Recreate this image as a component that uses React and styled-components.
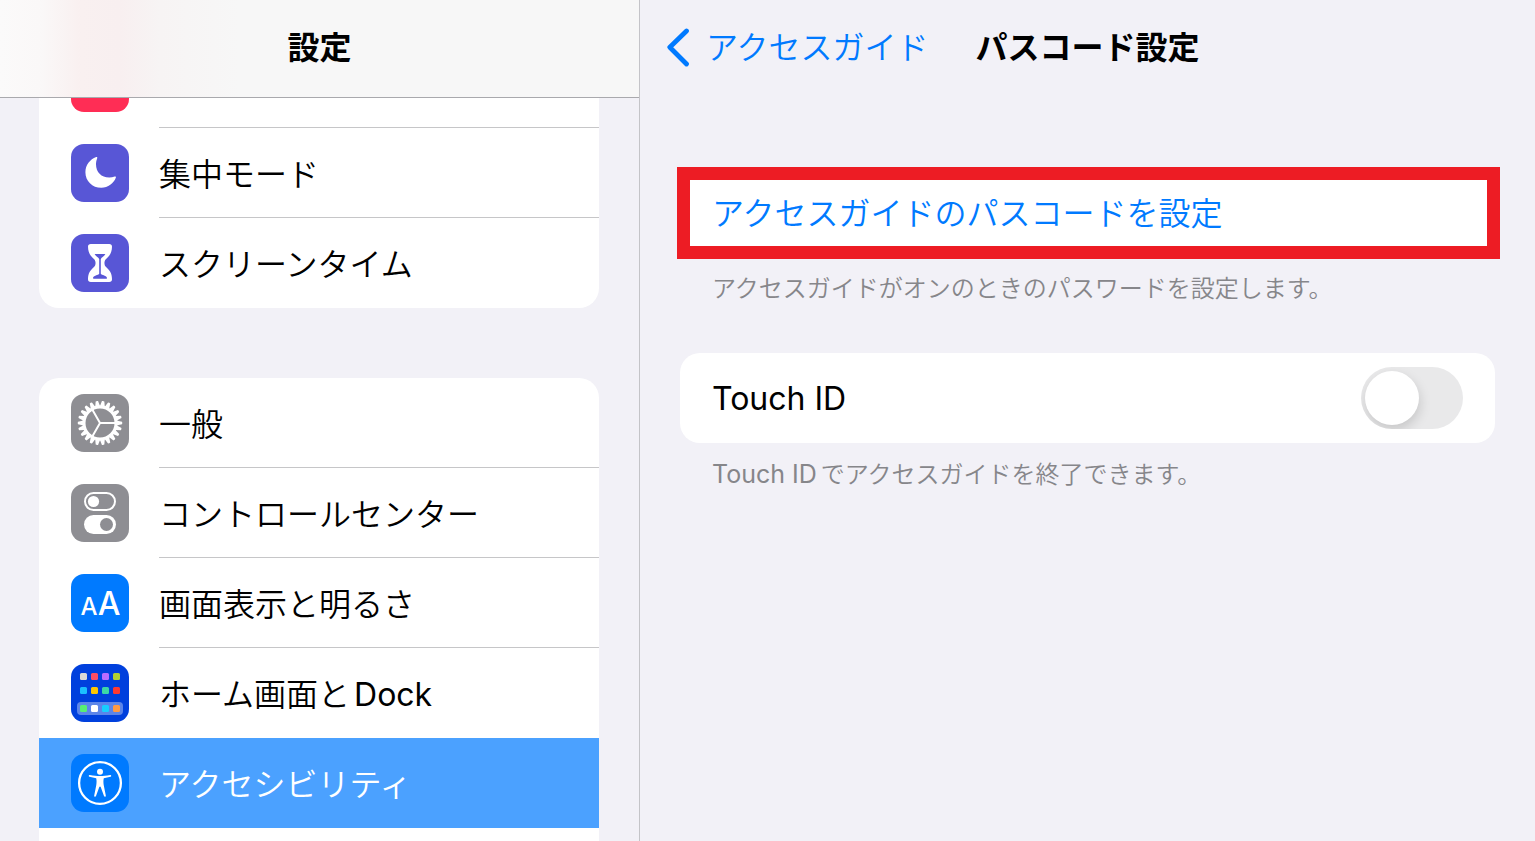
import React from "react";
import styled, { createGlobalStyle } from "styled-components";

const GlobalStyle = createGlobalStyle`
  *, *::before, *::after { box-sizing: border-box; }
  body {
    margin: 0;
    background: #f2f1f7;
    color: #000;
    font-family: Inter, "Noto Sans CJK JP", sans-serif;
    font-size: 32px;
    font-weight: 350;
    line-height: 48px;
  }
`;

const Screen = styled.div`
  display: flex;
  height: 100vh;
  overflow: hidden;
`;

const Sidebar = styled.nav`
  flex: 0 0 640px;
  border-right: 1px solid #c4c4c8;
  overflow: hidden;
`;

const SidebarHeader = styled.header`
  position: relative;
  z-index: 1;
  display: flex;
  align-items: center;
  justify-content: center;
  height: 98px;
  padding-bottom: 2px;
  border-bottom: 1px solid #a9a9ad;
  background: linear-gradient(90deg, #fbfafa 0, #faf8f8 40px, #f9f0f0 80px, #f8eff0 120px, #f7f4f4 160px, #f7f7f7 240px);
`;

const Title = styled.h1`
  margin: 0;
  font-size: 32px;
  font-weight: 600;
  line-height: 48px;
  white-space: nowrap;
`;

const Menu = styled.ul`
  list-style: none;
  margin: ${(p) => (p.$scrolled ? "-60px" : "70px")} 40px 0 39px;
  padding: 0;
  border-radius: 20px;
  overflow: hidden;
  background: #fff;
`;

const MenuLink = styled.a`
  display: flex;
  align-items: center;
  gap: 30px;
  height: 90px;
  padding-left: 32px;
  color: ${(p) => (p.$selected ? "#fff" : "#000")};
  background: ${(p) => (p.$selected ? "#4ba1ff" : "transparent")};
  text-decoration: none;
`;

const MenuLabel = styled.span`
  flex: 1;
  display: flex;
  align-items: center;
  height: 90px;
  padding-top: 4px;
  border-bottom: 1px solid ${(p) => (p.$divider ? "#c6c6c8" : "transparent")};
  white-space: nowrap;
`;

const Tile = styled.span`
  flex: none;
  width: 58px;
  height: 58px;
  border-radius: 13px;
  overflow: hidden;
  background: ${(p) => p.$color};

  svg { display: block; }
`;

const Latin = styled.span`
  font-size: ${(p) => (p.$small ? "25px" : "32px")};
  font-weight: 400;
  margin-left: ${(p) => (p.$spaceBefore ? "4px" : "0")};
  margin-right: ${(p) => (p.$spaceAfter ? "4px" : "0")};
`;

const Detail = styled.main`
  flex: 1;
  min-width: 0;
`;

const DetailHeader = styled.header`
  display: grid;
  grid-template-columns: 1fr auto 1fr;
  align-items: center;
  height: 98px;
  padding: 0 26px 2px;
`;

const BackButton = styled.button`
  display: flex;
  align-items: center;
  gap: 16px;
  justify-self: start;
  padding: 0;
  border: 0;
  background: none;
  color: #007aff;
  font: inherit;
  white-space: nowrap;
  cursor: pointer;
`;

const Sections = styled.div`
  display: flex;
  flex-direction: column;
  gap: 46px;
  padding: 70px 40px 40px;
`;

const Card = styled.div`
  position: relative;
  display: flex;
  align-items: center;
  justify-content: space-between;
  height: 90px;
  padding: 2px 32px 0;
  border-radius: 20px;
  background: #fff;
`;

const CardButton = styled.button`
  flex: 1;
  padding: 0;
  border: 0;
  background: none;
  color: #007aff;
  font: inherit;
  text-align: left;
  cursor: pointer;
`;

const Highlight = styled.span`
  position: absolute;
  inset: -1px -5px -1px -3px;
  border: 13px solid #ed1c24;
  pointer-events: none;
`;

const Note = styled.p`
  margin: 13px 32px 0;
  color: #86868a;
  font-size: 24px;
  line-height: 36px;
`;

const Switch = styled.input`
  appearance: none;
  flex: none;
  width: 102px;
  height: 62px;
  margin: 0 0 2px;
  padding: 4px;
  border-radius: 31px;
  background: #e9e9ea;
  overflow: hidden;
  cursor: pointer;

  &::before {
    content: "";
    display: block;
    width: 54px;
    height: 54px;
    border-radius: 50%;
    background: #fff;
    box-shadow: 1px 5px 12px rgba(0, 0, 0, 0.15);
  }

  &:checked { background: #34c759; }
  &:checked::before { margin-left: 40px; }
`;

const Svg = ({ children }) => (
  <svg width="58" height="58" viewBox="0 0 58 58" fill="none" aria-hidden="true">
    {children}
  </svg>
);

const MoonIcon = () => (
  <Svg>
    <path
      fill="#fff"
      d="M25.2 13.1C19 15.4 14.4 21 14.4 28.2C14.4 37 21.3 43.8 30.3 43.8C37 43.8 42.8 39.6 44.9 33.6C45.1 32.8 44.6 32.2 43.7 32.5C42 33.2 40.2 33.5 38.2 33.5C30.3 33.5 25 28.3 25 20.3C25 18 25.5 16 26.2 14.2C26.5 13.4 26 12.8 25.2 13.1Z"
    />
  </Svg>
);

const HourglassIcon = () => (
  <Svg>
    <path
      fill="#fff"
      d="M19.8 10H38.2C40 10 41 11 41 12.8C41 19 38.3 22 34.8 25.2C33 26.8 33 31.2 34.8 32.8C38.3 36 41 39 41 45.2C41 47 40 48 38.2 48H19.8C18 48 17 47 17 45.2C17 39 19.7 36 23.2 32.8C25 31.2 25 26.8 23.2 25.2C19.7 22 17 19 17 12.8C17 11 18 10 19.8 10Z"
    />
    <path fill="#5856d6" d="M23.6 20H34.4C33.4 22 30.5 23.4 29.8 25V39.8C30.5 41 36 42 36 44C36 44.6 35.7 44.8 35 44.8H23C22.3 44.8 22 44.6 22 44C22 42 27.5 41 28.2 39.8V25C27.5 23.4 24.6 22 23.6 20Z" />
  </Svg>
);

const teeth = Array.from({ length: 22 }, (_, i) => (i * 360) / 22);

const GearIcon = () => (
  <Svg>
    {teeth.map((angle) => (
      <path key={angle} fill="#fff" d="M45.5 26.5L51 27.8Q51.6 29 51 30.2L45.5 31.5Z" transform={`rotate(${angle} 29 29)`} />
    ))}
    <circle cx="29" cy="29" r="16" stroke="#fff" strokeWidth="3" />
    <path stroke="#fff" strokeWidth="2" d="M45 29H29L21 15.1M29 29L21 42.9" />
  </Svg>
);

const TogglesIcon = () => (
  <Svg>
    <rect x="14" y="9" width="30" height="17" rx="8.5" stroke="#fff" strokeWidth="2" />
    <circle cx="22.5" cy="17.5" r="5.6" fill="#fff" />
    <rect x="13" y="31" width="32" height="19" rx="9.5" fill="#fff" />
    <circle cx="35.5" cy="40.5" r="6.5" fill="#8e8e93" />
  </Svg>
);

const TextSizeIcon = () => (
  <Svg>
    <g fill="#fff" fontFamily="Inter, sans-serif" fontWeight="500" textAnchor="middle">
      <text x="18" y="41" fontSize="24">A</text>
      <text x="38" y="41" fontSize="32">A</text>
    </g>
  </Svg>
);

const appColors = [
  [9, ["#dadad6", "#ff4e63", "#b96cff", "#b2d130"]],
  [23, ["#1bbfff", "#ffc600", "#3cd7a6", "#ff3931"]],
  [41, ["#57ef72", "#ffffff", "#17cfff", "#ff9a43"]],
];

const HomeIcon = () => (
  <Svg>
    <rect x="6" y="38" width="46" height="13" rx="4" fill="#fff" fillOpacity="0.36" />
    {appColors.map(([y, colors]) =>
      colors.map((color, i) => <rect key={color} x={9 + i * 11} y={y} width="7" height="7" rx="1.5" fill={color} />)
    )}
  </Svg>
);

const AccessibilityIcon = () => (
  <Svg>
    <circle cx="29" cy="29" r="20.9" stroke="#fff" strokeWidth="2.3" />
    <circle cx="29" cy="17.7" r="3" fill="#fff" />
    <path
      fill="#fff"
      d="M18.8 21C22.5 21.8 26 22 29 22S35.500 21.800 39.200 21C40.400 20.800 40.600 22.500 39.500 22.800C37.200 23.400 35 23.800 32.800 24.200C32.200 26.500 32.400 29 32.800 31.500L34.800 41.500C35 42.900 33.500 43.300 33 42L29.700 33C29.500 32.300 28.500 32.300 28.300 33L25 42C24.500 43.300 23 42.900 23.200 41.500L25.200 31.500C25.600 29 25.800 26.500 25.200 24.200C23 23.800 20.800 23.400 18.500 22.800C17.400 22.500 17.600 20.800 18.800 21Z"
    />
  </Svg>
);

const ChevronIcon = () => (
  <svg width="24" height="40" viewBox="0 0 24 40" fill="none" aria-hidden="true">
    <path d="M20.500 3L3.800 19.200L20.500 36" stroke="#007aff" strokeWidth="4.800" strokeLinecap="round" strokeLinejoin="round" />
  </svg>
);

const MenuItem = ({ color, icon, children, selected, divider }) => (
  <li>
    <MenuLink href="#" $selected={selected} aria-current={selected ? "page" : undefined}>
      <Tile $color={color}>{icon}</Tile>
      <MenuLabel $divider={divider}>
        <span>{children}</span>
      </MenuLabel>
    </MenuLink>
  </li>
);

export default function App() {
  return (
    <>
      <GlobalStyle />
      <Screen>
        <Sidebar>
          <SidebarHeader>
            <Title>設定</Title>
          </SidebarHeader>
          <Menu $scrolled>
            <MenuItem color="#ff2d55" divider />
            <MenuItem color="#5856d6" icon={<MoonIcon />} divider>集中モード</MenuItem>
            <MenuItem color="#5856d6" icon={<HourglassIcon />}>スクリーンタイム</MenuItem>
          </Menu>
          <Menu>
            <MenuItem color="#8e8e93" icon={<GearIcon />} divider>一般</MenuItem>
            <MenuItem color="#8e8e93" icon={<TogglesIcon />} divider>コントロールセンター</MenuItem>
            <MenuItem color="#007aff" icon={<TextSizeIcon />} divider>画面表示と明るさ</MenuItem>
            <MenuItem color="#0040dd" icon={<HomeIcon />}>
              ホーム画面と<Latin $spaceBefore>Dock</Latin>
            </MenuItem>
            <MenuItem color="#007aff" icon={<AccessibilityIcon />} selected>アクセシビリティ</MenuItem>
            <MenuItem color="#007aff" />
          </Menu>
        </Sidebar>
        <Detail>
          <DetailHeader>
            <BackButton type="button">
              <ChevronIcon />
              アクセスガイド
            </BackButton>
            <Title as="h2">パスコード設定</Title>
          </DetailHeader>
          <Sections>
            <section>
              <Card>
                <CardButton type="button">アクセスガイドのパスコードを設定</CardButton>
                <Highlight />
              </Card>
              <Note>アクセスガイドがオンのときのパスワードを設定します。</Note>
            </section>
            <section>
              <Card>
                <label htmlFor="touch-id"><Latin>Touch ID</Latin></label>
                <Switch id="touch-id" type="checkbox" role="switch" />
              </Card>
              <Note><Latin $small $spaceAfter>Touch ID</Latin>でアクセスガイドを終了できます。</Note>
            </section>
          </Sections>
        </Detail>
      </Screen>
    </>
  );
}
